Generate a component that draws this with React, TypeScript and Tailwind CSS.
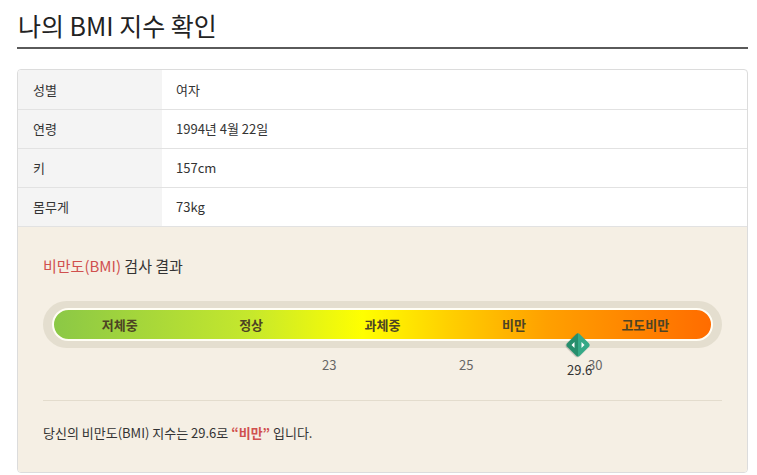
import React from "react";

const font = { fontFamily: '"Noto Sans CJK KR", "Noto Sans", sans-serif' };

const rows = [
  { label: "성별", value: "여자" },
  { label: "연령", value: "1994년 4월 22일" },
  { label: "키", value: "157cm" },
  { label: "몸무게", value: "73kg" },
];

const levels = ["저체중", "정상", "과체중", "비만", "고도비만"];

const ticks = [
  { n: "23", left: 279 },
  { n: "25", left: 416 },
  { n: "30", left: 545 },
];

export default function App() {
  return (
    <div className="w-[757px] h-[475px] bg-white text-[#333]" style={font}>
      <div className="pl-[17px] pr-[9px] pt-[7px]">
        {/* Title */}
        <h1 className="text-[25px] leading-[36px] text-[#222] pl-px pb-[4px] border-b-2 border-[#5a5a5a]">
          나의 BMI 지수 확인
        </h1>

        {/* Card */}
        <div className="mt-[20px] rounded-[4px] border border-[#dcdcdc] overflow-hidden">
          {rows.map((r, i) => (
            <div
              key={r.label}
              className={`flex h-[39px] items-center text-[13px] ${i > 0 ? "border-t border-[#e2e2e2]" : ""}`}
            >
              <div className="w-[144px] h-full bg-[#f4f4f4] flex items-center pl-[15px] text-[#333]">{r.label}</div>
              <div className="flex-1 pl-[14px] text-[#333]">{r.value}</div>
            </div>
          ))}

          {/* Result */}
          <div className="border-t border-[#e2e2e2] bg-[#f5efe4] px-[25px] pt-[28px] h-[246px]">
            <div className="text-[15px] leading-[22px]">
              <span className="text-[#d0504e]">비만도(BMI)</span> <span className="text-[#333]">검사 결과</span>
            </div>

            <div className="relative mt-[24px] h-[99px]">
              <div className="h-[47px] rounded-full bg-[#e4decf] py-[7px] px-[9px]">
                <div
                  className="h-[33px] rounded-full border-2 border-[#fffdf4] flex items-center"
                  style={{
                    background:
                      "linear-gradient(to right, #8bc846 0%, #c6e82c 30%, #ffff00 47%, #ffd000 60%, #ffa000 75%, #ff6c00 100%)",
                  }}
                >
                  {levels.map((l) => (
                    <div key={l} className="flex-1 text-center text-[13px] font-bold text-[#4d4424]">
                      {l}
                    </div>
                  ))}
                </div>
              </div>

              {ticks.map((t) => (
                <div
                  key={t.n}
                  className="absolute top-[54px] text-[13px] text-[#666]"
                  style={{ left: t.left }}
                >
                  {t.n}
                </div>
              ))}

              {/* marker */}
              <div className="absolute left-[522px] top-[31px] w-[26px] h-[26px] flex items-center justify-center">
                <div className="w-[18px] h-[18px] rotate-45 rounded-[3px] bg-[linear-gradient(45deg,#268e6c_50%,#36a987_50%)] shadow-[0_1px_1px_rgba(0,0,0,0.25)]" />
                <svg className="absolute inset-0" viewBox="0 0 26 26">
                  <path d="M9.5 10 L6.5 13 L9.5 16 Z" fill="#fff" />
                  <path d="M16.5 10 L19.5 13 L16.5 16 Z" fill="#fff" />
                </svg>
              </div>
              <div className="absolute left-[524px] top-[59px] text-[13px] text-[#333]">29.6</div>
            </div>

            <div className="border-t border-[#e3dccd] pt-[22px] text-[13px] text-[#333]">
              당신의 비만도(BMI) 지수는 29.6로 <span className="text-[#d0504e] font-bold">“비만”</span> 입니다.
            </div>
          </div>
        </div>
      </div>
    </div>
  );
}
